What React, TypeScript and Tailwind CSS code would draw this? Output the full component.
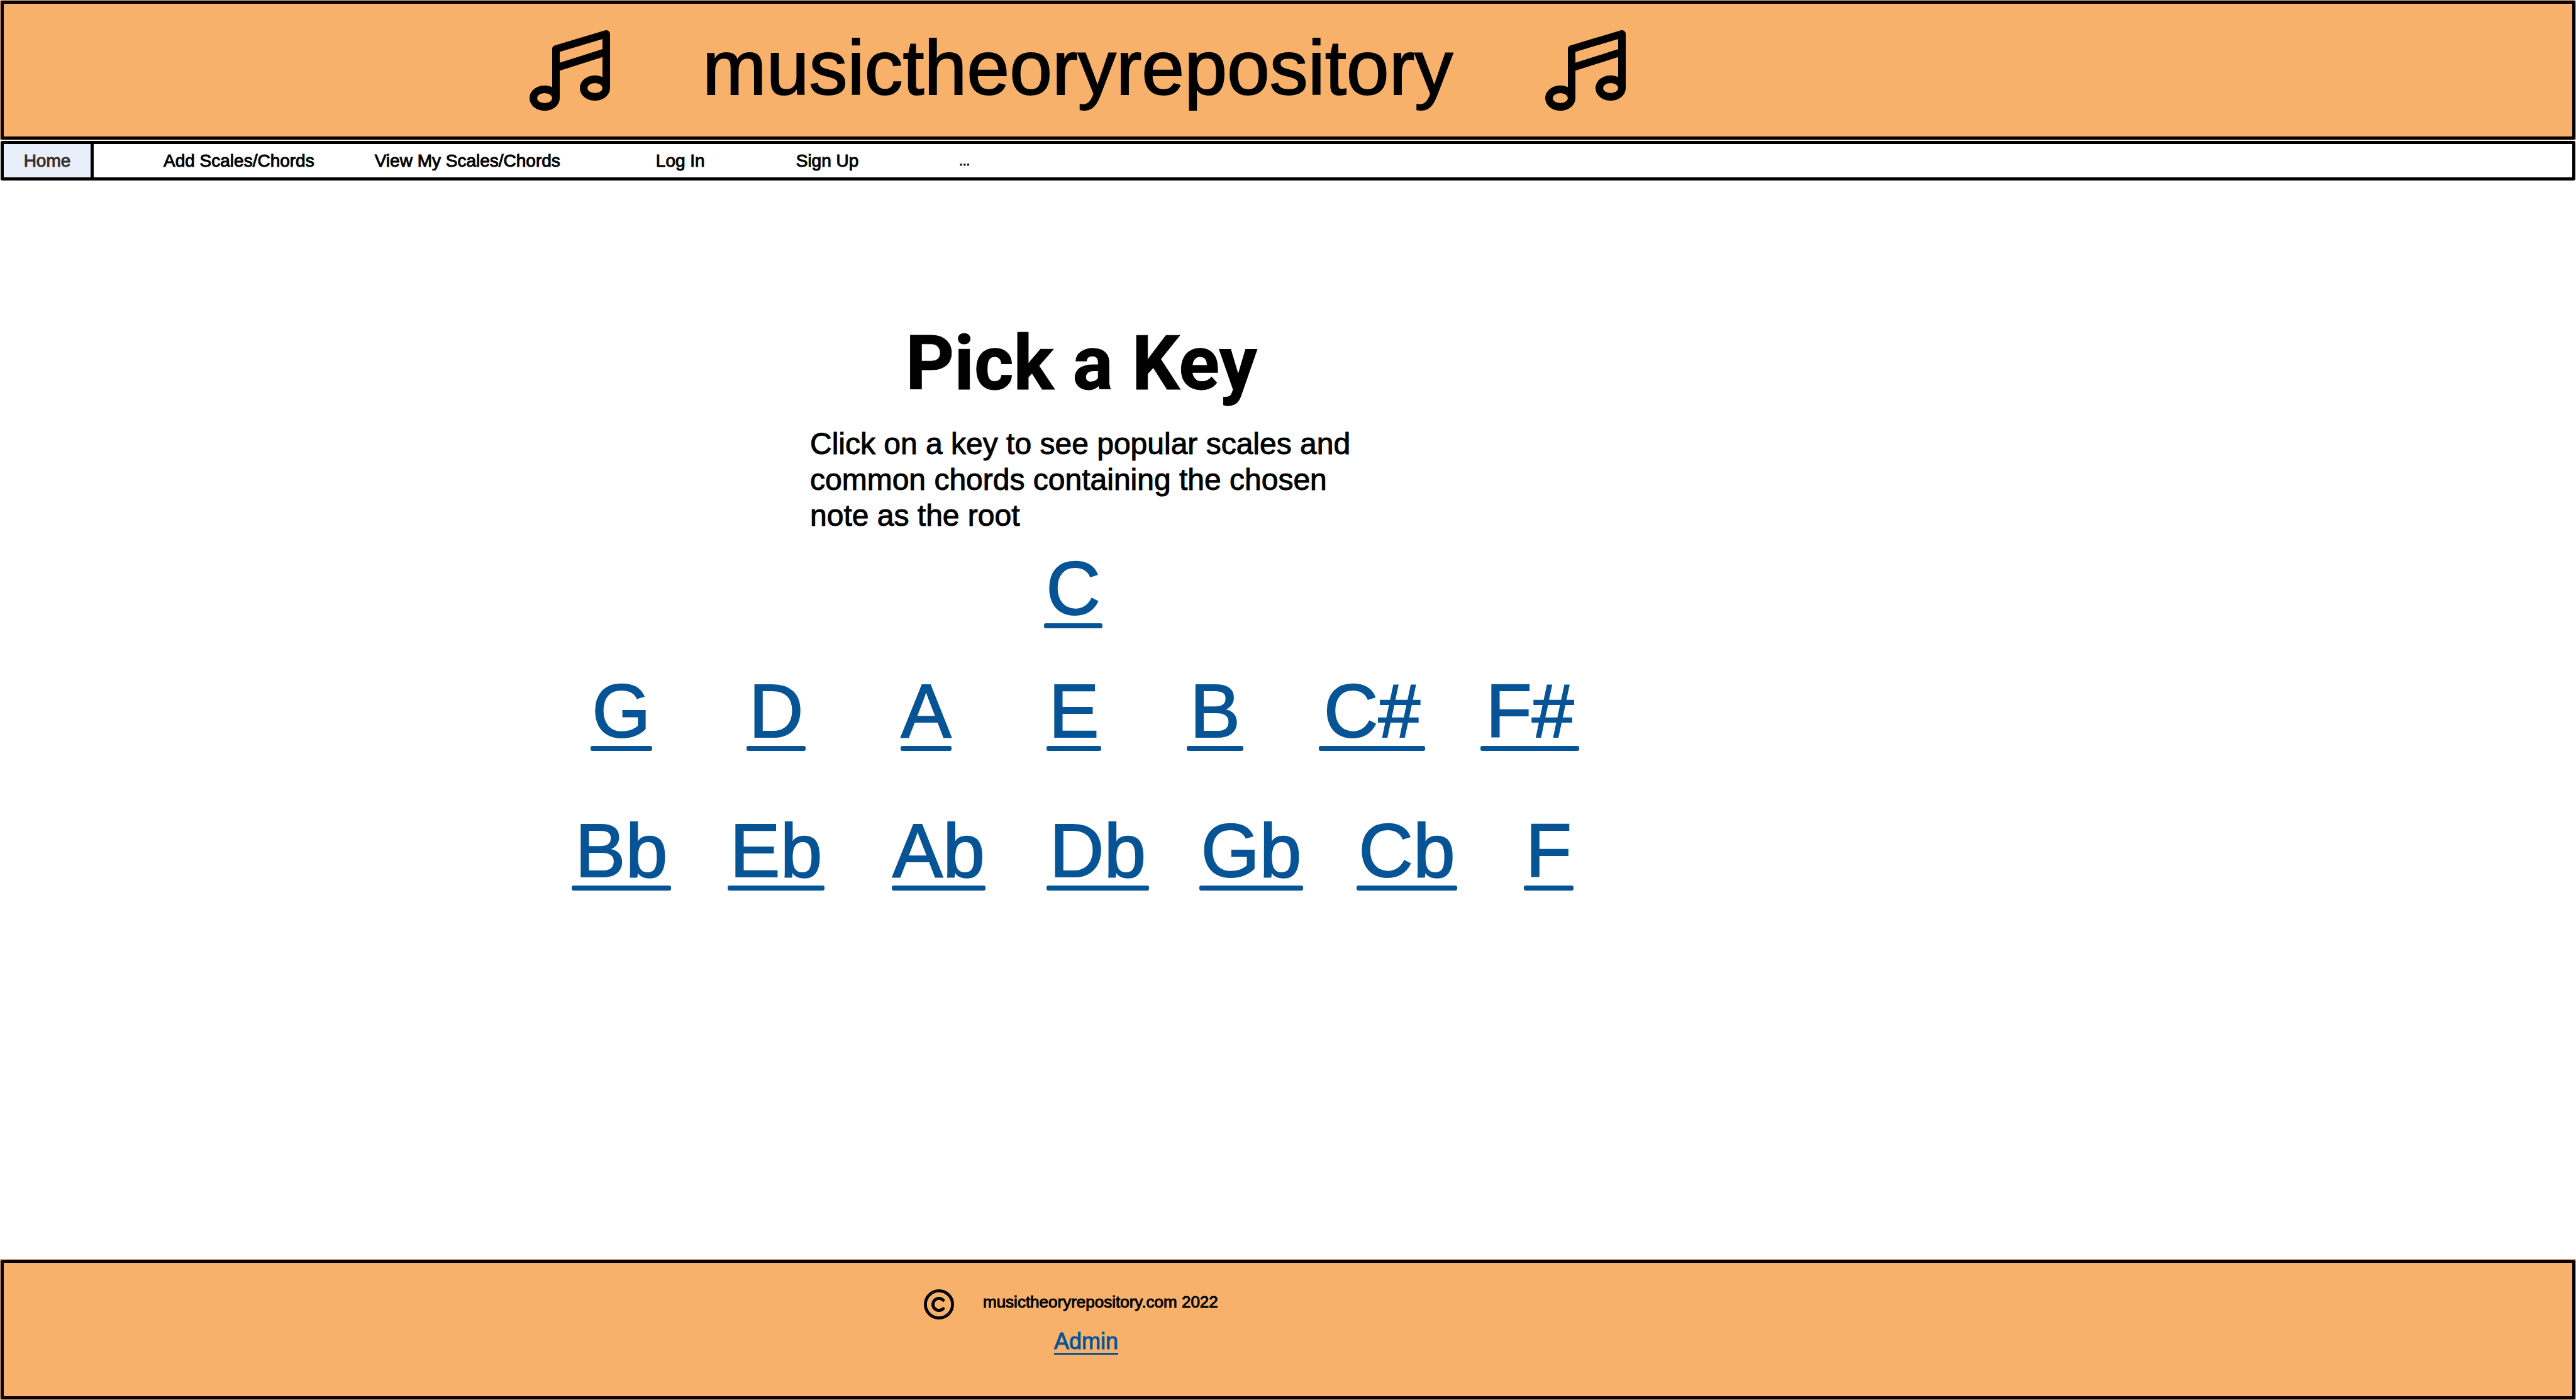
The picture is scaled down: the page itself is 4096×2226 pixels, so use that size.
type KeyLink = { label: string; className: string };

const rootRow: KeyLink[] = [{ label: "C", className: "w-[93px]" }];

const sharpRow: KeyLink[] = [
  { label: "G", className: "mr-[150px] w-[98px]" },
  { label: "D", className: "mr-[151px] w-[94px]" },
  { label: "A", className: "mr-[151px] w-[81px]" },
  { label: "E", className: "mr-[136px] w-[87px]" },
  { label: "B", className: "mr-[120px] w-[90px]" },
  { label: "C#", className: "mr-[88px] w-[169px]" },
  { label: "F#", className: "w-[157px]" },
];

const flatRow: KeyLink[] = [
  { label: "Bb", className: "mr-[90px] w-[158px]" },
  { label: "Eb", className: "mr-[107px] w-[154px]" },
  { label: "Ab", className: "mr-[97px] w-[149px]" },
  { label: "Db", className: "mr-[80px] w-[163px]" },
  { label: "Gb", className: "mr-[85px] w-[165px]" },
  { label: "Cb", className: "mr-[106px] w-[160px]" },
  { label: "F", className: "w-[79px]" },
];

const navItems = [
  { label: "Add Scales/Chords", className: "ml-[111px]" },
  { label: "View My Scales/Chords", className: "ml-[96px]" },
  { label: "Log In", className: "ml-[152px]" },
  { label: "Sign Up", className: "ml-[145px]" },
];

function MusicIcon() {
  return (
    <svg
      viewBox="0 0 128 128"
      className="size-32 shrink-0"
      fill="none"
      stroke="currentColor"
      strokeWidth="12"
      strokeLinejoin="round"
      aria-hidden="true"
    >
      <ellipse cx="24" cy="108" rx="18" ry="14" />
      <ellipse cx="104" cy="92" rx="18" ry="14" />
      <path d="M42 108V30L122 6V92" />
      <path d="M42 60L122 34.5" />
    </svg>
  );
}

function CopyrightIcon() {
  return (
    <svg
      viewBox="0 0 48 48"
      className="size-12 shrink-0"
      fill="none"
      stroke="currentColor"
      strokeWidth="4.8"
      strokeLinecap="round"
      aria-label="Copyright"
    >
      <circle cx="24" cy="24" r="21.6" />
      <path d="M30.8 30.8A9.6 9.6 0 1 1 30.8 17.2" />
    </svg>
  );
}

function KeyRow({ keys, className }: { keys: KeyLink[]; className: string }) {
  return (
    <div className={"flex " + className}>
      {keys.map((key) => (
        <a
          key={key.label}
          href="#"
          className={
            "flex flex-col text-center text-[120px] leading-[112px] text-[#065495] [-webkit-text-stroke:2px] " +
            key.className
          }
        >
          {key.label}
          <span className="h-2 rounded-[3px] bg-[#065495]" />
        </a>
      ))}
    </div>
  );
}

export default function App() {
  return (
    <div className="flex min-h-screen flex-col bg-white font-['Liberation_Sans',sans-serif] text-black">
      <header className="bg-[#f7b16a] p-px">
        <div className="flex h-[221px] items-center rounded-[3px] border-[5px] border-black pl-[836px]">
          <MusicIcon />
          <div className="mx-[147px] pb-2 text-[122px] leading-[122px] [-webkit-text-stroke:2px]">
            musictheoryrepository
          </div>
          <MusicIcon />
        </div>
      </header>

      <nav className="px-px pt-px">
        <div className="flex h-[63px] items-center rounded-[3px] border-[5px] border-black text-[28px] leading-[34px] whitespace-nowrap [-webkit-text-stroke:1px]">
          <a
            href="#"
            aria-current="page"
            className="flex w-[143px] items-center justify-center self-stretch border-r-[5px] border-black bg-[#e8effb] text-[#3a2e26]"
          >
            Home
          </a>
          {navItems.map((item) => (
            <a key={item.label} href="#" className={item.className}>
              {item.label}
            </a>
          ))}
          <a href="#" className="ml-[160px] text-[20px]">
            ...
          </a>
        </div>
      </nav>

      <main className="flex-1 pt-[231px]">
        <h1 className="ml-[1440px] font-['Roboto',sans-serif] text-[120px] leading-[120px] font-bold [-webkit-text-stroke:1px]">
          Pick a Key
        </h1>
        <p className="mt-[39px] ml-[1288px] w-[880px] text-[48px] leading-[57px] [-webkit-text-stroke:1px]">
          Click on a key to see popular scales and common chords containing the chosen note as the root
        </p>
        <KeyRow keys={rootRow} className="mt-[31px] pl-[1660px]" />
        <KeyRow keys={sharpRow} className="mt-[75px] pl-[939px]" />
        <KeyRow keys={flatRow} className="mt-[102px] pl-[909px]" />
      </main>

      <footer className="bg-[#f7b16a] p-px">
        <div className="h-[222px] rounded-[3px] border-[5px] border-black pt-[42px]">
          <div className="flex items-center pl-[1463px]">
            <CopyrightIcon />
            <p className="ml-[46px] pb-2 text-[26px] leading-[30px] [-webkit-text-stroke:1px]">
              musictheoryrepository.com 2022
            </p>
          </div>
          <div className="mt-[17px] flex pl-[1670px]">
            <a
              href="#"
              className="border-b-[3px] border-[#065495] text-[36px] leading-[36px] text-[#065495] [-webkit-text-stroke:1px]"
            >
              Admin
            </a>
          </div>
        </div>
      </footer>
    </div>
  );
}
